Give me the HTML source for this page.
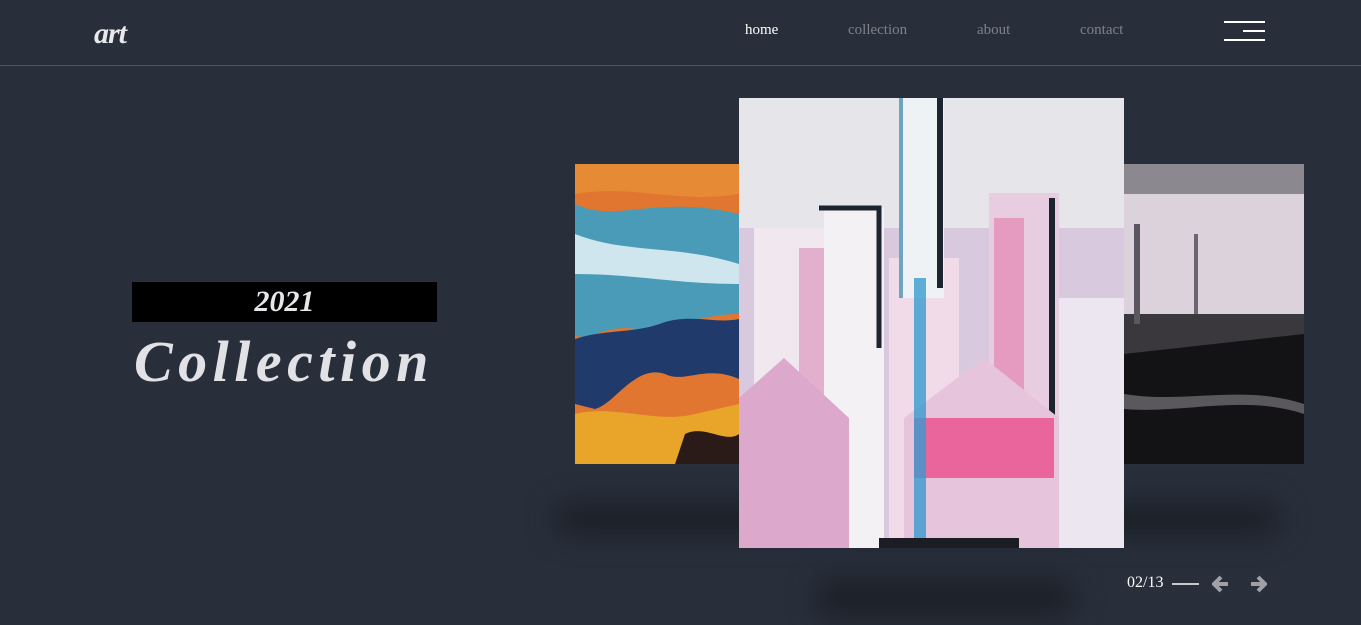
<!DOCTYPE html>
<html><head><meta charset="utf-8"><style>
*{margin:0;padding:0;box-sizing:border-box}
body{width:1361px;height:625px;background:#282f3b;overflow:hidden;position:relative;font-family:"Liberation Serif",serif}
.hdr{position:absolute;left:0;top:0;width:1361px;height:66px;border-bottom:1px solid #4e5561}
.logo{position:absolute;left:94px;top:17px;color:#e8e8ec;font:italic bold 30px "Liberation Serif",serif;letter-spacing:-1px}
.nav a{position:absolute;top:22px;font-size:15px;color:#7d8188;text-decoration:none}
.bar{position:absolute;height:2px;background:#fff}
.year{position:absolute;left:132px;top:282px;width:305px;height:40px;background:#000;color:#e6e6ea;text-align:center;font:italic bold 30px/40px "Liberation Serif",serif}
.coll{position:absolute;left:134px;top:328px;color:#e2e2e6;font:italic bold 58px "Liberation Serif",serif;letter-spacing:5.5px}
.sh{position:absolute;background:#1b1f26;filter:blur(14px);border-radius:30px}
.p{position:absolute;overflow:hidden}
</style></head><body>
<div class="hdr"></div>
<div class="logo">art</div>
<div class="nav"><a style="left:745px;color:#fff">home</a><a style="left:848px">collection</a><a style="left:977px">about</a><a style="left:1080px">contact</a></div>
<div class="bar" style="left:1224px;top:21px;width:41px"></div>
<div class="bar" style="left:1243px;top:30px;width:22px"></div>
<div class="bar" style="left:1224px;top:39px;width:41px"></div>
<div class="year">2021</div>
<div class="coll">Collection</div>
<div class="sh" style="left:555px;top:503px;width:725px;height:32px"></div>
<div class="sh" style="left:815px;top:580px;width:260px;height:36px"></div>
<div class="p" style="left:575px;top:164px;width:164px;height:300px">
<svg width="164" height="300"><rect width="164" height="300" fill="#e0762f"/>
<path d="M0 40 C40 60 80 30 164 50 L164 150 C120 150 90 170 60 165 C30 160 10 180 0 170Z" fill="#4a9bb8"/>
<path d="M0 70 C50 90 100 80 164 100 L164 120 C100 120 60 110 0 110Z" fill="#cfe6ee"/>
<path d="M0 175 C30 165 60 170 90 158 C120 150 140 160 164 155 L164 215 C130 200 110 220 90 210 C60 200 40 240 20 245 L0 240Z" fill="#1f3a6b"/>
<path d="M0 250 C40 240 80 260 120 250 L164 240 L164 300 L0 300Z" fill="#e9a52a"/>
<path d="M110 270 C130 260 150 280 164 270 L164 300 L100 300Z" fill="#2a1a18"/>
<path d="M0 0 L164 0 L164 30 C100 40 60 20 0 30Z" fill="#e68a35"/>
</svg></div>
<div class="p" style="left:1124px;top:164px;width:180px;height:300px">
<svg width="180" height="300"><rect width="180" height="300" fill="#dcd2dc"/>
<rect y="0" width="180" height="30" fill="#8c8890"/>
<rect y="150" width="180" height="45" fill="#3a383c"/>
<path d="M0 190 L180 170 L180 300 L0 300Z" fill="#131214"/>
<path d="M0 230 C60 240 120 220 180 240 L180 250 C120 230 60 250 0 245Z" fill="#5a585c"/>
<rect x="10" y="60" width="6" height="100" fill="#5b5760"/><rect x="70" y="70" width="4" height="80" fill="#6b6770"/>
</svg></div>
<div class="p" style="left:739px;top:98px;width:385px;height:450px">
<svg width="385" height="450"><rect width="385" height="450" fill="#e6e6ea"/>
<rect x="0" y="130" width="385" height="320" fill="#d8c9de"/>
<rect x="15" y="130" width="100" height="320" fill="#f0e7ef"/>
<rect x="60" y="150" width="40" height="300" fill="#d98cb5" opacity=".6"/>
<rect x="85" y="110" width="60" height="340" fill="#f3f1f3"/>
<rect x="150" y="160" width="70" height="290" fill="#f1dbe8"/>
<rect x="160" y="0" width="45" height="200" fill="#eef2f5"/>
<rect x="198" y="0" width="6" height="190" fill="#1c2430"/>
<rect x="160" y="0" width="4" height="200" fill="#6fa4c0"/>
<rect x="250" y="95" width="70" height="355" fill="#e8ccdf"/>
<rect x="255" y="120" width="30" height="200" fill="#e286b0" opacity=".7"/>
<rect x="310" y="100" width="6" height="350" fill="#1c2430"/>
<path d="M0 300 L45 260 L110 320 L110 450 L0 450Z" fill="#dca9cd"/>
<path d="M165 320 L245 260 L320 320 L320 450 L165 450Z" fill="#e6c4dc"/>
<rect x="175" y="320" width="140" height="60" fill="#eb4e8c" opacity=".8"/>
<rect x="175" y="180" width="12" height="270" fill="#3a9bd0" opacity=".8"/>
<path d="M80 110 L140 110 L140 250" stroke="#1c2430" stroke-width="5" fill="none"/>
<rect x="320" y="200" width="65" height="250" fill="#ebe6ef"/>
<rect x="140" y="440" width="140" height="10" fill="#1c1c24"/>
</svg></div>
<div style="position:absolute;left:1127px;top:574px;color:#fff;font-size:16px">02/13</div>
<div style="position:absolute;left:1172px;top:583px;width:27px;height:2px;background:#c8c8cc"></div>
<svg style="position:absolute;left:1212px;top:575px" width="18" height="18"><path d="M9 2 L2 9 L9 16 M2 9 L16 9" stroke="#a0a0a6" stroke-width="4" fill="none"/></svg>
<svg style="position:absolute;left:1249px;top:575px" width="18" height="18"><path d="M9 2 L16 9 L9 16 M16 9 L2 9" stroke="#a0a0a6" stroke-width="4" fill="none"/></svg>
</body></html>
